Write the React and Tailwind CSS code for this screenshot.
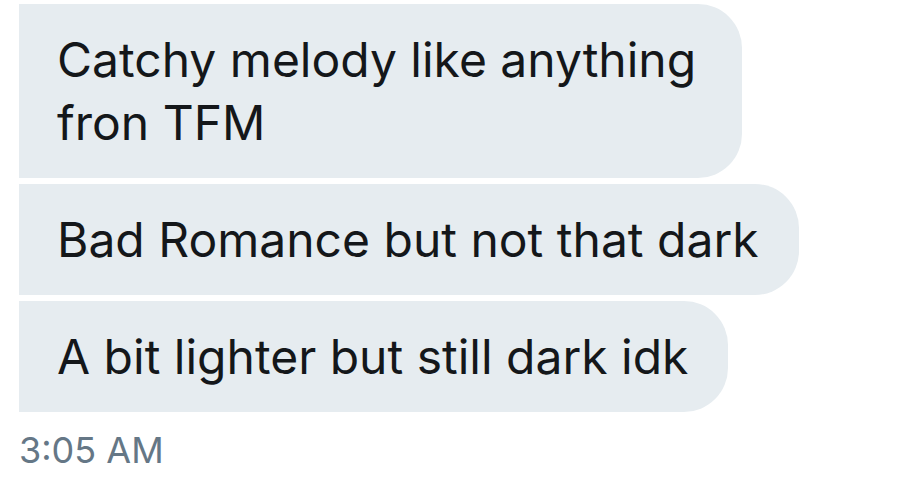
export default function App() {
  const messages = [
    { text: "Catchy melody like anything fron TFM", cls: "max-w-[723px]" },
    { text: "Bad Romance but not that dark", cls: "" },
    { text: "A bit lighter but still dark idk", cls: "" },
  ];

  return (
    <div className="min-h-screen bg-white pt-[4px] pl-[19px]" style={{ fontFamily: "Inter, 'Liberation Sans', sans-serif" }}>
      <div className="flex flex-col items-start gap-[6px]">
        {messages.map((m) => (
          <div
            key={m.text}
            className={`${m.cls} bg-[#e6ecf0] text-[#14171a] rounded-r-[44px] pl-[38px] pr-[40px] py-[24px] text-[48px] leading-[63px]`}
          >
            {m.text}
          </div>
        ))}
      </div>
      <div className="mt-[16px] text-[36px] leading-[44px] text-[#657786]">3:05 AM</div>
    </div>
  );
}
